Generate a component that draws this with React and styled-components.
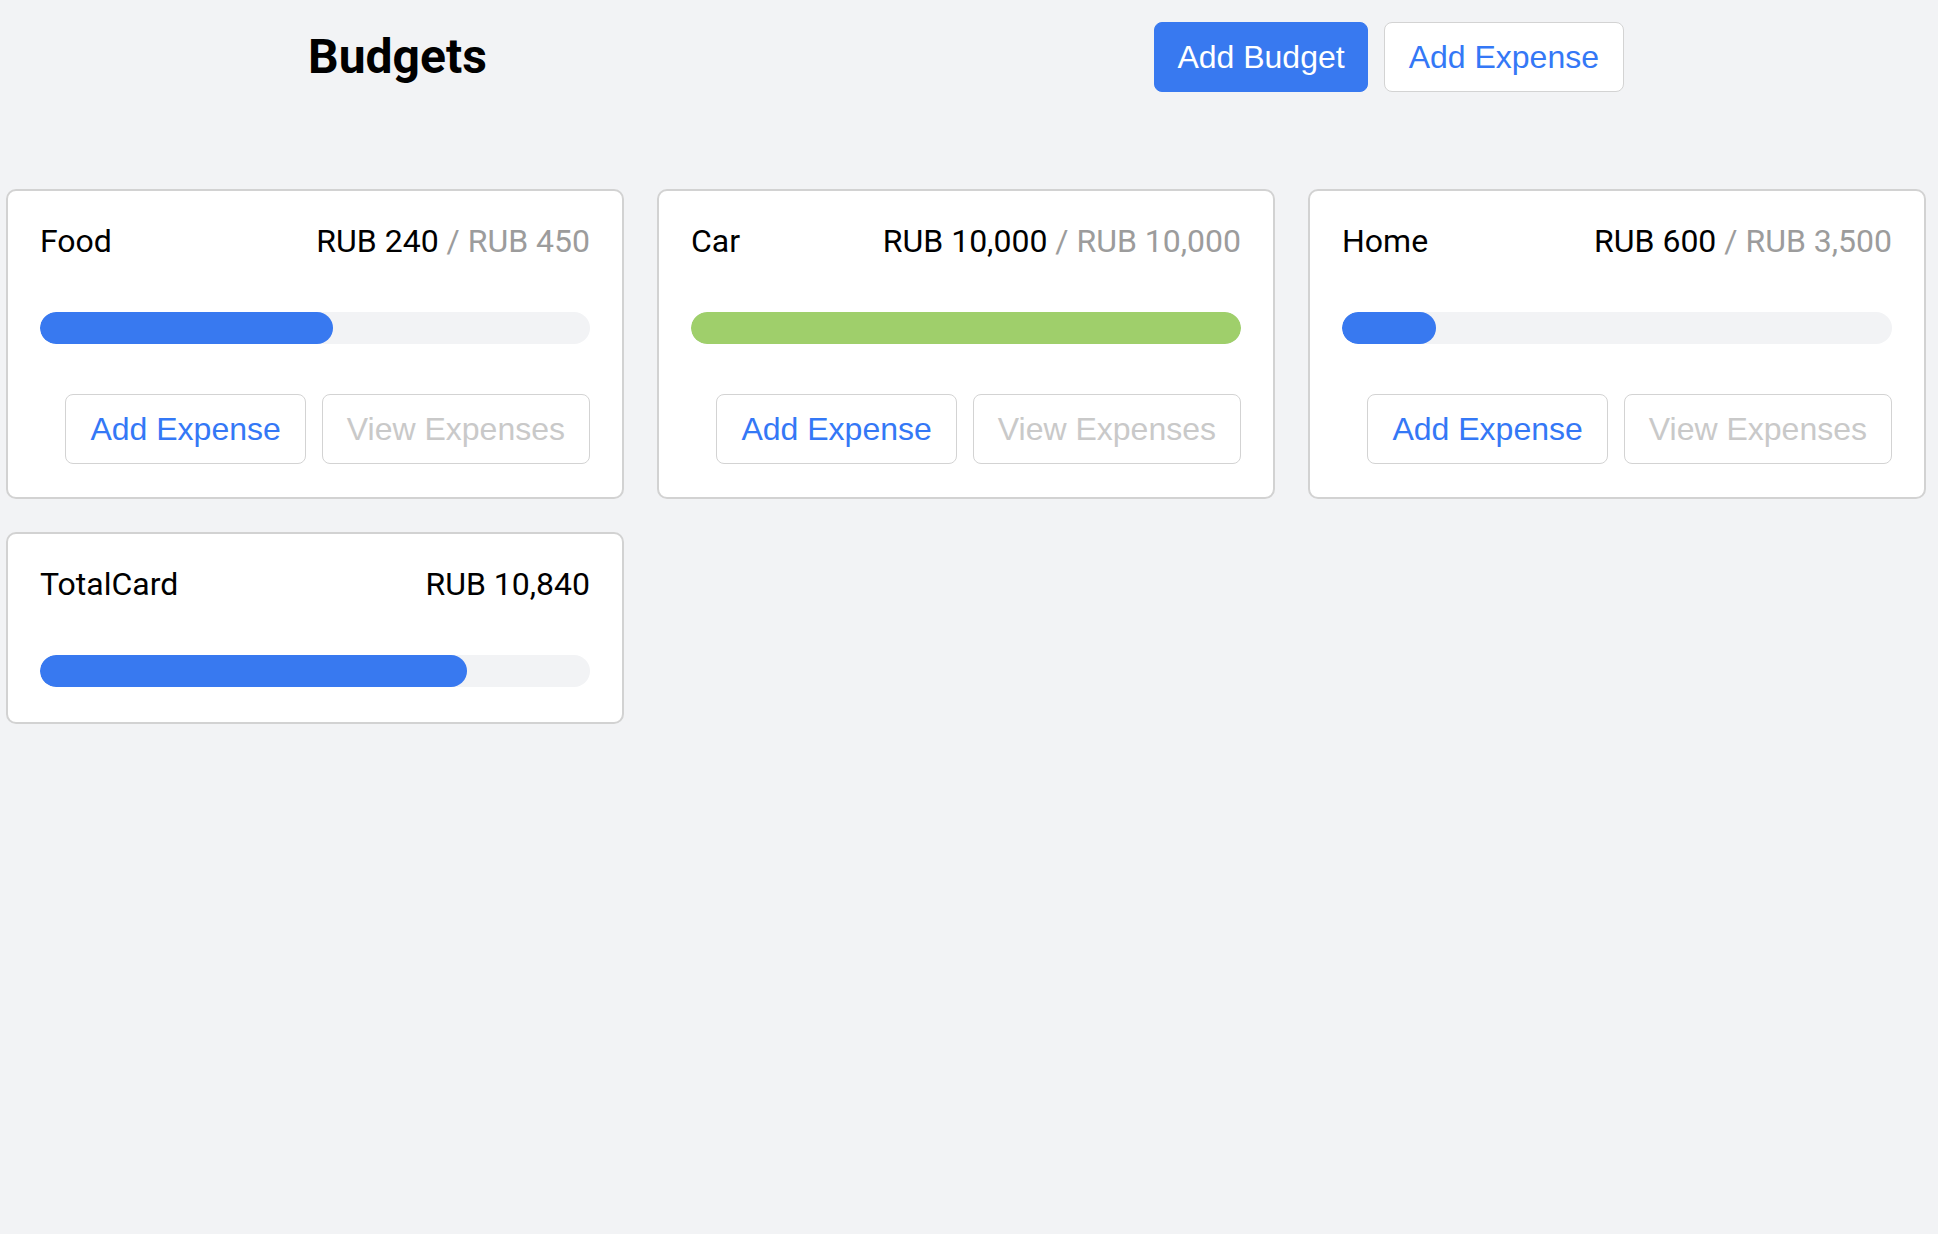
import styled, { createGlobalStyle, css } from "styled-components";

const GlobalStyle = createGlobalStyle`
  body {
    margin: 0;
    background: #f2f3f5;
    font-family: Roboto, "Liberation Sans", sans-serif;
    color: #000;
  }
`;

const Page = styled.div`
  min-height: 100vh;
`;

const Header = styled.header`
  display: flex;
  align-items: center;
  justify-content: space-between;
  padding: 22px 314px 0 308px;
`;

const Title = styled.h1`
  margin: 0;
  font-family: Roboto, sans-serif;
  font-weight: 700;
  font-size: 48px;
  line-height: 56px;
`;

const ButtonGroup = styled.div`
  display: flex;
  gap: 16px;
`;

const Button = styled.button`
  font-family: "Liberation Sans", Arial, sans-serif;
  font-size: 32px;
  line-height: 36px;
  padding: 16px 24px;
  border-radius: 8px;
  border: 1px solid #d3d3d3;
  background: #fff;
  color: #3478f6;
  cursor: pointer;

  ${(p) =>
    p.$primary &&
    css`
      padding: 16px 22px;
      background: #3879f0;
      border-color: #3879f0;
      color: #fff;
    `}

  ${(p) =>
    p.$muted &&
    css`
      color: #c9c9c9;
    `}
`;

const Grid = styled.div`
  display: grid;
  grid-template-columns: repeat(3, 1fr);
  gap: 33px;
  padding: 97px 12px 0 6px;
  align-items: start;
`;

const Card = styled.div`
  background: #fff;
  border: 2px solid #d2d2d2;
  border-radius: 10px;
  padding: 32px 32px ${(p) => (p.$total ? "35px" : "33px")};
`;

const CardHead = styled.div`
  display: flex;
  justify-content: space-between;
  align-items: baseline;
  font-size: 32px;
  line-height: 37px;
`;

const Name = styled.div``;

const Amount = styled.div``;

const Max = styled.span`
  color: #9c9c9c;
`;

const Track = styled.div`
  margin-top: 52px;
  height: 32px;
  border-radius: 16px;
  background: #f2f3f5;
  overflow: hidden;
`;

const Fill = styled.div`
  height: 100%;
  border-radius: 16px;
  background: ${(p) => (p.$full ? "#9fcf6b" : "#3879f0")};
`;

const Actions = styled.div`
  display: flex;
  justify-content: flex-end;
  gap: 16px;
  margin-top: 50px;
`;

const fmt = (n) => "RUB " + n.toLocaleString("en-US");

function BudgetCard({ name, amount, max, hideButtons }) {
  const ratio = max ? Math.min(amount / max, 1) : 0;
  return (
    <Card $total={hideButtons}>
      <CardHead>
        <Name>{name}</Name>
        <Amount>
          {fmt(amount)}
          {!hideButtons && <Max> / {fmt(max)}</Max>}
        </Amount>
      </CardHead>
      <Track>
        <Fill $full={ratio >= 1} style={{ width: `${ratio * 100}%` }} />
      </Track>
      {!hideButtons && (
        <Actions>
          <Button>Add Expense</Button>
          <Button $muted>View Expenses</Button>
        </Actions>
      )}
    </Card>
  );
}

const budgets = [
  { name: "Food", amount: 240, max: 450 },
  { name: "Car", amount: 10000, max: 10000 },
  { name: "Home", amount: 600, max: 3500 },
];

export default function App() {
  const total = budgets.reduce((s, b) => s + b.amount, 0);
  const totalMax = budgets.reduce((s, b) => s + b.max, 0);
  return (
    <Page>
      <GlobalStyle />
      <Header>
        <Title>Budgets</Title>
        <ButtonGroup>
          <Button $primary>Add Budget</Button>
          <Button>Add Expense</Button>
        </ButtonGroup>
      </Header>
      <Grid>
        {budgets.map((b) => (
          <BudgetCard key={b.name} {...b} />
        ))}
        <BudgetCard name="TotalCard" amount={total} max={totalMax} hideButtons />
      </Grid>
    </Page>
  );
}
